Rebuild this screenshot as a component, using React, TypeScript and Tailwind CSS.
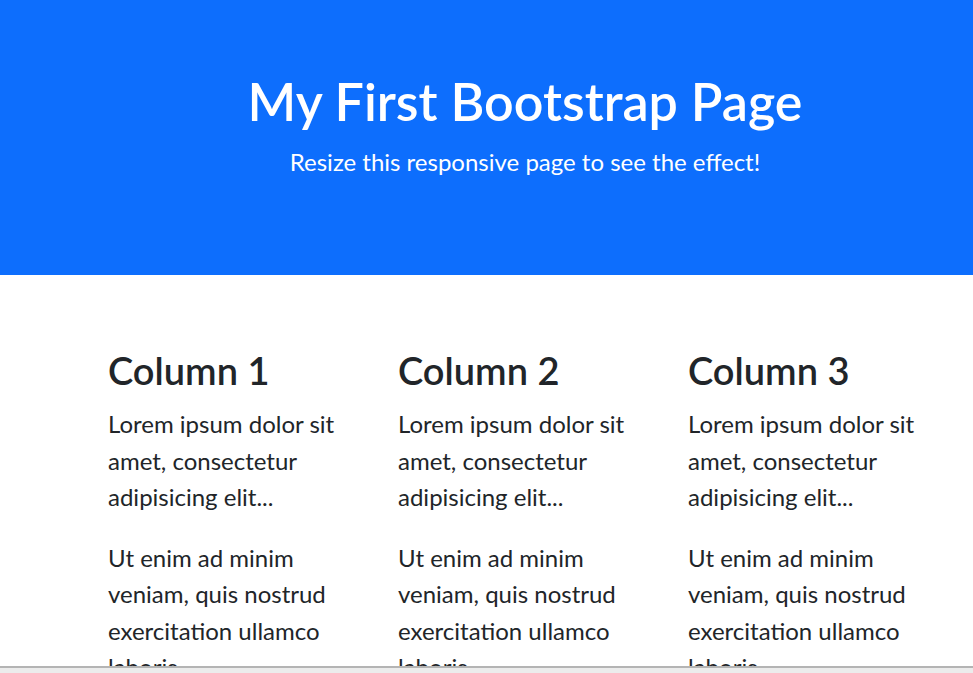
const cols = ["Column 1", "Column 2", "Column 3"];

export default function App() {
  return (
    <div className="w-screen min-h-screen overflow-hidden bg-white font-['Lato',sans-serif] text-[#212529]">
      <div className="w-[1050px]">
        <div className="bg-[#0d6efd] pt-[70px] pb-[71px] text-center text-white">
          <h1 className="mb-[12px] text-[52px] leading-[62px] font-semibold">My First Bootstrap Page</h1>
          <p className="mb-[24px] text-[24px] leading-[36px]">Resize this responsive page to see the effect!</p>
        </div>
        <div className="mx-auto w-[870px] pt-[75px]">
          <div className="grid grid-cols-3">
            {cols.map((c) => (
              <div key={c} className="px-[18px]">
                <h3 className="mb-[16px] text-[38px] leading-[40px] font-semibold">{c}</h3>
                <p className="mb-[24px] text-[24px] leading-[36.5px]">Lorem ipsum dolor sit amet, consectetur adipisicing elit...</p>
                <p className="mb-[24px] text-[24px] leading-[36.5px]">Ut enim ad minim veniam, quis nostrud exercitation ullamco laboris...</p>
              </div>
            ))}
          </div>
        </div>
      </div>
      <div className="fixed bottom-0 left-0 h-[7px] w-full border-t-2 border-[#b4b4b4] bg-[#ececec]" />
    </div>
  );
}
